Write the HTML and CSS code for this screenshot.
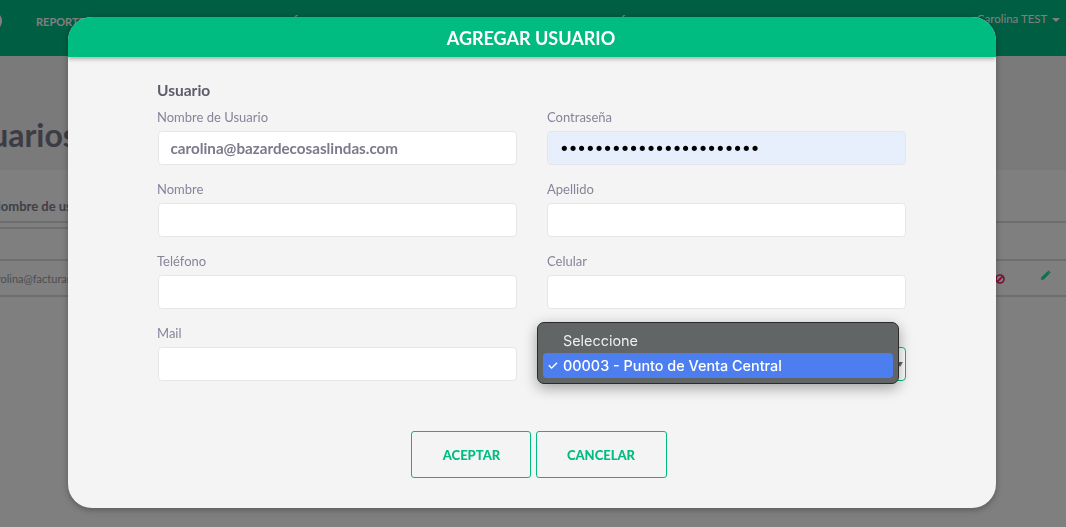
FILE: index.html
```html
<!DOCTYPE html>
<html lang="es">
<head>
<meta charset="utf-8">
<title>Agregar Usuario</title>
<link rel="stylesheet" href="styles.css">
</head>
<body>
<div class="page">
  <nav class="nav">
    <span class="logo"></span>
    <span class="nav-link">REPORTES</span>
    <span class="nav-link nav-link-2">FACTURACIÓN</span>
    <span class="nav-link nav-link-3">CONFIGURACIÓN</span>
    <span class="nav-user">Carolina TEST <i class="caret"></i></span>
  </nav>
  <h1 class="title">Usuarios</h1>
  <section class="panel">
    <div class="row row-head"><span class="cell-name">Nombre de usuario</span></div>
    <div class="row row-filter"><span class="filter-box"></span></div>
    <div class="row row-data">
      <span class="cell-mail">carolina@facturante.com</span>
      <span class="actions">
        <svg class="icon-ban" viewBox="0 0 12 12" width="10" height="10"><circle cx="6" cy="6" r="4.800" fill="none" stroke="#ff1a6e" stroke-width="2"/><path d="M2.800 9.200 9.200 2.800" stroke="#ff1a6e" stroke-width="2"/></svg>
        <svg class="icon-pen" viewBox="0 0 12 12" width="11" height="11"><path d="M1 11l.6-3L8 1.600 10.400 4 4 10.400z" fill="#14e0a0"/><path d="M8.800.9l.7-.3 2 2-.3.700-.6.600L8.200 1.500z" fill="#14e0a0"/></svg>
      </span>
    </div>
  </section>
</div>

<div class="overlay"></div>

<main class="modal">
  <header class="modal-head">AGREGAR USUARIO</header>
  <div class="modal-body">
    <h2 class="section">Usuario</h2>
    <form class="form">
      <div class="field"><label class="label">Nombre de Usuario</label><div class="input input-strong">carolina@bazardecosaslindas.com</div></div>
      <div class="field field-right"><label class="label">Contraseña</label><div class="input input-filled">•••••••••••••••••••••••</div></div>
      <div class="field"><label class="label">Nombre</label><div class="input"></div></div>
      <div class="field field-right"><label class="label">Apellido</label><div class="input"></div></div>
      <div class="field"><label class="label">Teléfono</label><div class="input"></div></div>
      <div class="field field-right"><label class="label">Celular</label><div class="input"></div></div>
      <div class="field"><label class="label">Mail</label><div class="input"></div></div>
      <div class="field field-right">
        <div class="input input-select"><i class="select-arrow"></i></div>
        <ul class="popup">
          <li class="opt">Seleccione</li>
          <li class="opt opt-on"><span class="check">✓</span>00003 - Punto de Venta Central</li>
        </ul>
      </div>
    </form>
    <div class="buttons">
      <button class="btn btn-ok" type="button">ACEPTAR</button>
      <button class="btn btn-cancel" type="button">CANCELAR</button>
    </div>
  </div>
</main>
</body>
</html>
```
FILE: styles.css
```css
* { box-sizing: border-box; }
html, body { margin: 0; height: 100%; overflow: hidden; }
body { font-family: Lato, "Open Sans", sans-serif; background: #f4f4f4; color: #4a4a55; }

.page { height: 527px; overflow: hidden; display: flex; flex-direction: column; }
.nav { height: 56px; flex: none; background: #00bc86; display: flex; align-items: flex-start; }
.logo { width: 20px; height: 20px; flex: none; margin: 11px 0 0 -18px; border: 3px solid #fff; border-radius: 50%; }
.nav-link { margin: 15px 0 0 34px; font-size: 11px; font-weight: 700; color: #fff; white-space: nowrap; }
.nav-link-2 { margin-left: 140px; }
.nav-link-3 { margin-left: 235px; }
.nav-user { margin: 12px 6px 0 auto; font-size: 11.500px; color: #fff; white-space: nowrap; }
.caret { display: inline-block; margin-left: 2px; border: 4px solid transparent; border-top-color: #fff; border-bottom: 0; vertical-align: middle; }

.title { margin: 61px 0 0 -47px; font-size: 32px; line-height: 36px; font-weight: 700; color: #787888; }
.panel { margin-top: 17px; flex: 1; background: #fff; }
.row { display: flex; border-bottom: 2px solid #dcdcdc; }
.row-head { height: 53px; align-items: flex-end; padding-bottom: 7px; }
.row-filter { height: 38px; }
.row-data { height: 36px; align-items: center; }
.filter-box { width: 68px; margin-top: 4px; border-top: 2px solid #dcdcdc; }
.cell-name { margin-left: -9px; font-size: 13px; font-weight: 700; color: #80808c; white-space: nowrap; }
.cell-mail { margin-left: -14px; font-size: 11px; color: #9a9aa5; white-space: nowrap; }
.actions { margin-left: auto; margin-right: 15px; display: flex; align-items: center; gap: 35px; }
.icon-ban { margin-top: 1px; }
.icon-pen { margin-top: -6px; }

.overlay { position: fixed; inset: 0; background: rgba(0, 0, 0, .5); }

.modal { position: absolute; left: 68px; top: 17px; width: 928px; height: 491px; background: #f4f4f4; border-radius: 24px; overflow: hidden; box-shadow: 0 2px 6px rgba(0, 0, 0, .3); }
.modal-head { height: 40px; padding-right: 2px; background: #00bc80; color: #fff; font-size: 18px; font-weight: 700; line-height: 43px; text-align: center; box-shadow: 0 2px 4px rgba(0, 0, 0, .3); position: relative; }
.modal-body { padding: 25px 90px 0 89px; }
.section { margin: 0; font-size: 15.500px; line-height: 17px; font-weight: 700; color: #5c5c6b; }
.form { display: grid; grid-template-columns: 360px 359px; column-gap: 30px; row-gap: 15px; margin-top: 9px; }
.field { position: relative; display: flex; flex-direction: column; justify-content: flex-end; }
.label { height: 23px; font-size: 13px; line-height: 18px; color: #85859a; }
.input { height: 34px; margin-left: 1px; background: #fff; border: 1px solid #e6e6ea; border-radius: 4px; padding: 0 12px 0 11.500px; font-size: 15.200px; line-height: 33px; color: #7a7a8c; }
.field-right .input { margin-left: 0; }
.input-strong { font-weight: 700; }
.field-right .input-filled { padding-left: 11px; background: #e8effc; color: #000; font-family: "DejaVu Sans", sans-serif; font-size: 18px; letter-spacing: -1.950px; overflow: hidden; white-space: nowrap; }
.field-right .input-select { border-color: #00bc80; position: relative; }
.select-arrow { position: absolute; right: 2px; top: 14px; border: 3px solid transparent; border-top: 5px solid #666; border-bottom: 0; }

.popup { position: absolute; left: -10px; top: -2px; width: 362px; height: 62px; margin: 0; padding: 5px; list-style: none; background: #626566; border: 1px solid #2b2b2b; border-radius: 7px; box-shadow: 0 4px 14px rgba(0, 0, 0, .35); }
.opt { position: relative; height: 25px; padding-left: 20px; font-family: Inter, "Noto Sans", sans-serif; font-size: 14.400px; line-height: 25px; color: #eee; border-radius: 4px; white-space: nowrap; }
.opt-on { background: #4d7ef0; color: #fff; font-weight: 500; }
.check { position: absolute; left: 4px; top: 0; font-size: 13px; }

.buttons { display: flex; justify-content: center; gap: 5px; margin-top: 50px; padding-left: 14px; }
.btn { height: 47px; background: transparent; border: 1px solid #00bc80; border-radius: 3px; color: #00bc80; font-family: inherit; font-size: 13px; font-weight: 900; }
.btn-ok { width: 120px; padding-left: 8px; }
.btn-cancel { width: 131px; }
```
